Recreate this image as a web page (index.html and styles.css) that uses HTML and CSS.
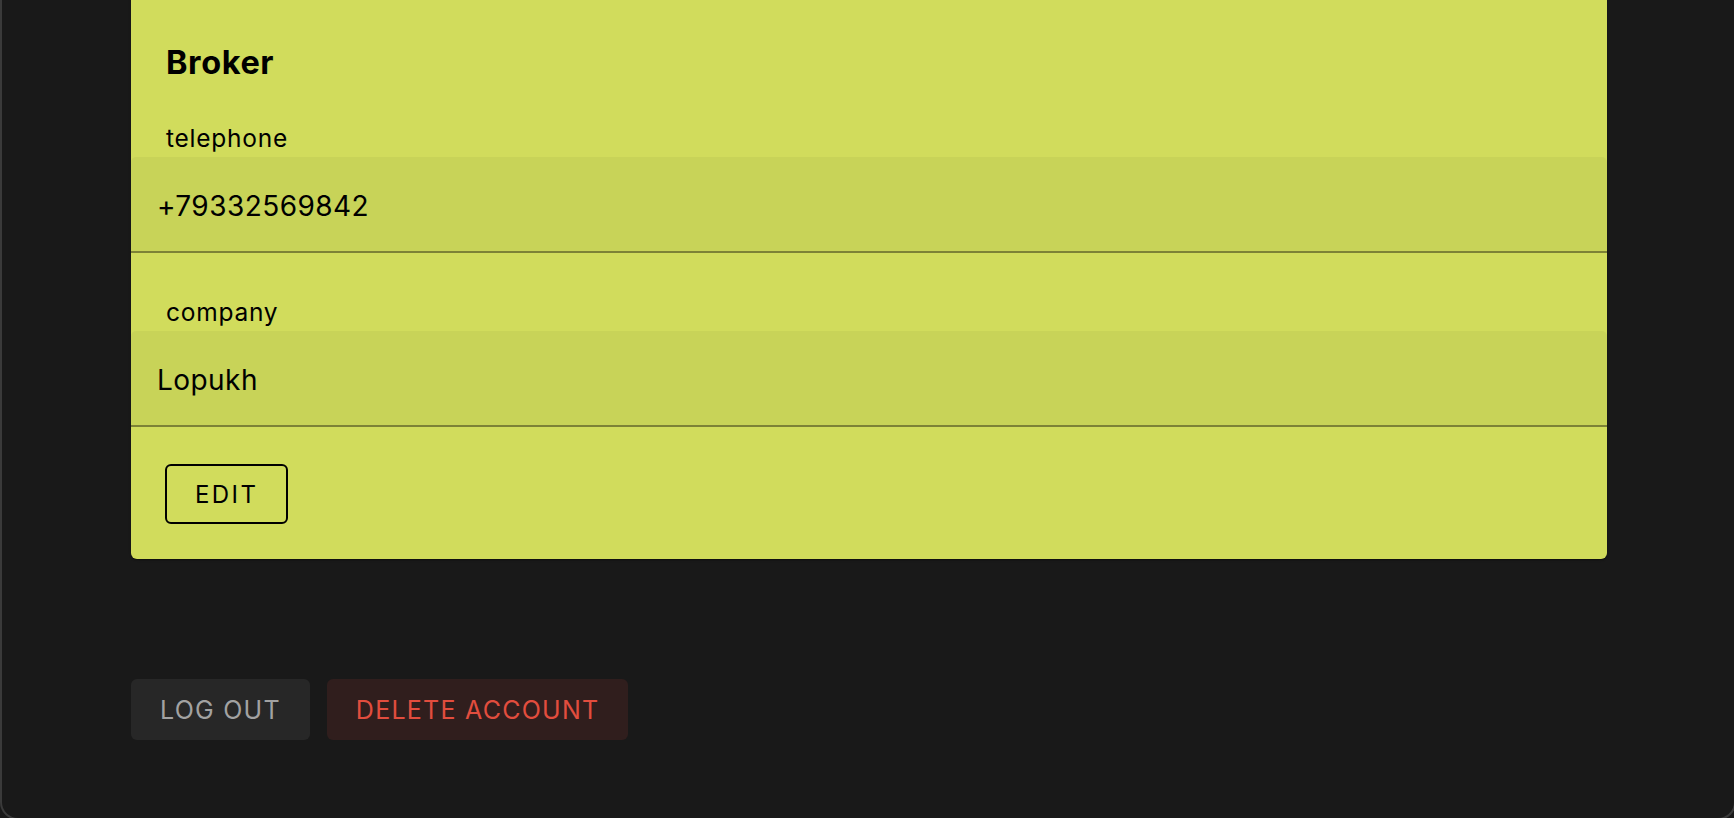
FILE: index.html
```html
<!DOCTYPE html>
<html lang="en">
<head>
<meta charset="utf-8">
<title>Profile</title>
<link rel="stylesheet" href="styles.css">
</head>
<body>
<div class="frame">
  <main class="content">
    <section class="card">
      <h2 class="card-title">Broker</h2>
      <div class="field">
        <div class="field-label">telephone</div>
        <div class="field-input">+79332569842</div>
      </div>
      <div class="field">
        <div class="field-label">company</div>
        <div class="field-input">Lopukh</div>
      </div>
      <div class="card-actions">
        <button class="btn-outline" type="button">Edit</button>
      </div>
    </section>
    <div class="account-actions">
      <button class="btn btn-logout" type="button">Log out</button>
      <button class="btn btn-delete" type="button">Delete account</button>
    </div>
  </main>
</div>
</body>
</html>
```
FILE: styles.css
```css
* { box-sizing: border-box; }

html, body {
  margin: 0;
  padding: 0;
  height: 100%;
  overflow: hidden;
  background: #191919;
  font-family: Inter, "Noto Sans", sans-serif;
}

.frame {
  width: 1736px;
  height: 820px;
  background: #191919;
  border: 2px solid #3a3a3a;
  border-top: none;
  border-radius: 0 0 18px 18px;
  overflow: hidden;
}

.content {
  padding: 0 0 0 129px;
  width: 1605px;
}

.card {
  margin-top: -20px;
  padding: 63px 0 35px;
  background: #d1dc5c;
  border-radius: 6px;
  box-shadow: 0 2px 1px -1px rgba(0,0,0,0.2), 0 1px 1px 0 rgba(0,0,0,0.14), 0 1px 3px 0 rgba(0,0,0,0.12);
  color: #000;
}

.card-title {
  margin: 0 0 39px;
  padding-left: 35px;
  font-size: 32.5px;
  letter-spacing: 0.6px;
  line-height: 40px;
  font-weight: 700;
}

.field + .field { margin-top: 43px; }

.field-label {
  padding-left: 35px;
  margin-bottom: 3px;
  font-size: 24.5px;
  letter-spacing: 0.75px;
  line-height: 32px;
}

.field-input {
  padding: 32px 26px 28px;
  font-size: 28px;
  letter-spacing: 0.45px;
  line-height: 34px;
  background: rgba(0,0,0,0.04);
  border-bottom: 2px solid #7d8236;
  border-radius: 5px 5px 0 0;
}

.card-actions {
  padding: 37px 0 0 34px;
}

.btn-outline {
  height: 60px;
  padding: 0 28px;
  font-family: inherit;
  font-size: 24px;
  letter-spacing: 0.1em;
  text-transform: uppercase;
  color: #000;
  background: transparent;
  border: 2px solid #000;
  border-radius: 6px;
}

.account-actions {
  display: flex;
  gap: 17px;
  margin-top: 120px;
}

.btn {
  height: 61px;
  padding: 0 29px;
  font-family: inherit;
  font-size: 25px;
  letter-spacing: 1.25px;
  text-transform: uppercase;
  border: none;
  border-radius: 6px;
}

.btn-logout {
  background: #272727;
  color: #a2a2a2;
}

.btn-delete {
  background: #301e1d;
  color: #e24d3e;
}
```
